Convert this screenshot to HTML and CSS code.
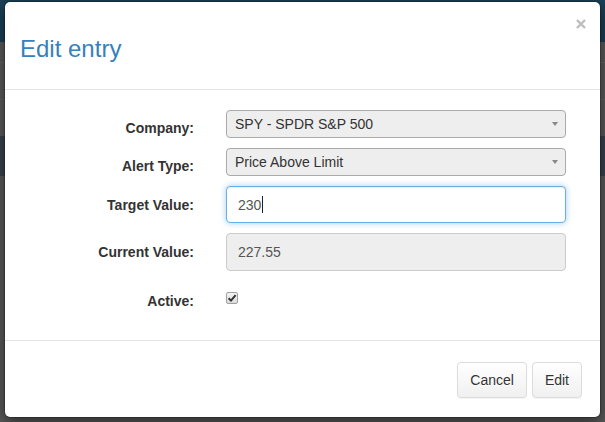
FILE: index.html
```html
<!DOCTYPE html>
<html lang="en">
<head>
<meta charset="utf-8">
<title>Edit entry</title>
<link rel="stylesheet" href="styles.css">
</head>
<body>
<div class="page">
  <div class="navbar"></div>
  <div class="band band-a"></div>
  <div class="band band-b"></div>
  <div class="band band-c"></div>
  <div class="band band-d"></div>
</div>

<div class="modal">
  <div class="modal-header">
    <h3 class="modal-title">Edit entry</h3>
    <span class="close" aria-label="Close">
      <svg width="10" height="10" viewBox="0 0 10 10"><path d="M1 1 L9 9 M9 1 L1 9" stroke="#bdbdbd" stroke-width="2.4" stroke-linecap="butt"/></svg>
    </span>
  </div>
  <div class="modal-body">
    <div class="form-grid">
      <div class="label label-top">Company:</div>
      <div class="select"><span>SPY - SPDR S&amp;P 500</span><span class="caret"></span></div>

      <div class="label label-top">Alert Type:</div>
      <div class="select"><span>Price Above Limit</span><span class="caret"></span></div>

      <div class="label label-mid">Target Value:</div>
      <div class="field field-focus field-target"><span>230</span><span class="cursor"></span></div>

      <div class="label label-mid">Current Value:</div>
      <div class="field field-disabled field-current"><span>227.55</span></div>

      <div class="label label-check">Active:</div>
      <div class="check-cell">
        <span class="checkbox">
          <svg width="10" height="10" viewBox="0 0 10 10"><path d="M1.6 5.2 L4 7.6 L8.6 2.2" fill="none" stroke="#333" stroke-width="2"/></svg>
        </span>
      </div>
    </div>
  </div>
  <div class="modal-footer">
    <button class="btn">Cancel</button>
    <button class="btn">Edit</button>
  </div>
</div>
</body>
</html>
```

FILE: styles.css
```css
* { box-sizing: border-box; }

html, body {
  margin: 0;
  padding: 0;
}

body {
  width: 605px;
  height: 422px;
  overflow: hidden;
  background: #5a5a5a;
  font-family: "Liberation Sans", Arial, sans-serif;
  font-size: 14px;
  color: #333;
  position: relative;
}

/* backdrop page (already dimmed) */
.page {
  display: flex;
  flex-direction: column;
}
.navbar {
  height: 42px;
  background: #1b4057;
}
.band { background: #5b5b5b; }
.band-a { height: 21px; border-bottom: 1px solid #666; }
.band-b { height: 37px; border-bottom: 1px solid #646464; }
.band-c { height: 36px; }
.band-d { height: 40px; background: #3a4350; }

/* modal */
.modal {
  position: absolute;
  left: 4px;
  top: 1px;
  width: 597px;
  background: #fff;
  border: 1px solid rgba(0, 0, 0, 0.2);
  border-radius: 6px;
  box-shadow: 0 5px 15px rgba(0, 0, 0, 0.5);
  background-clip: padding-box;
}

.modal-header {
  display: flex;
  justify-content: space-between;
  align-items: flex-start;
  padding: 15px;
  border-bottom: 1px solid #e5e5e5;
}

.modal-title {
  margin: 19px 0 12px;
  font-size: 24px;
  font-weight: 400;
  line-height: 26px;
  color: #3581bc;
}

.close {
  display: block;
  width: 10px;
  height: 10px;
  margin-top: 2px;
  margin-right: -1px;
}
.close svg { display: block; }

.modal-body {
  padding: 20px 15px 29px 15px;
}

.form-grid {
  display: grid;
  grid-template-columns: 174px 340px;
  column-gap: 32px;
  row-gap: 10px;
}

.label {
  font-weight: 700;
  text-align: right;
  line-height: 20px;
  color: #333;
}
.label-top { padding-top: 8px; }
.label-mid { align-self: center; }
.label-check { padding-top: 10px; }

.select {
  display: flex;
  align-items: center;
  height: 28px;
  padding: 0 7px 0 8px;
  background: #eeeeee;
  border: 1px solid #aaa;
  border-radius: 4px;
  color: #333;
  line-height: 20px;
}
.caret {
  margin-left: auto;
  width: 0;
  height: 0;
  border-top: 4px solid #888;
  border-left: 3.5px solid transparent;
  border-right: 3.5px solid transparent;
}

.field {
  display: flex;
  align-items: center;
  padding: 0 11px;
  border: 1px solid #ccc;
  border-radius: 4px;
  color: #555;
  line-height: 20px;
}
.field-target { height: 37px; }
.field-current { height: 38px; }
.field-focus {
  background: #fff;
  border-color: #66afe9;
  box-shadow: inset 0 1px 1px rgba(0, 0, 0, 0.075), 0 0 6px rgba(102, 175, 233, 0.6);
}
.field-disabled {
  background: #eeeeee;
}
.cursor {
  display: inline-block;
  width: 1px;
  height: 17px;
  margin-left: 1px;
  background: #222;
}

.check-cell {
  padding-top: 11px;
}
.checkbox {
  display: flex;
  align-items: center;
  justify-content: center;
  width: 12px;
  height: 12px;
  border: 1px solid #a0a0a0;
  border-radius: 2px;
  background: linear-gradient(#f4f4f4, #dcdcdc);
}
.checkbox svg { display: block; }

.modal-footer {
  display: flex;
  justify-content: flex-end;
  gap: 5px;
  padding: 21px 18px 19px 15px;
  border-top: 1px solid #e5e5e5;
}

.btn {
  height: 36px;
  padding: 0 12px;
  font-family: inherit;
  font-size: 14px;
  line-height: 34px;
  color: #333;
  background: linear-gradient(#ffffff, #f0f0f0);
  border: 1px solid #dcdcdc;
  border-radius: 4px;
  text-shadow: 0 1px 0 #fff;
  box-shadow: 0 1px 1px rgba(0, 0, 0, 0.05);
  cursor: pointer;
}
```
